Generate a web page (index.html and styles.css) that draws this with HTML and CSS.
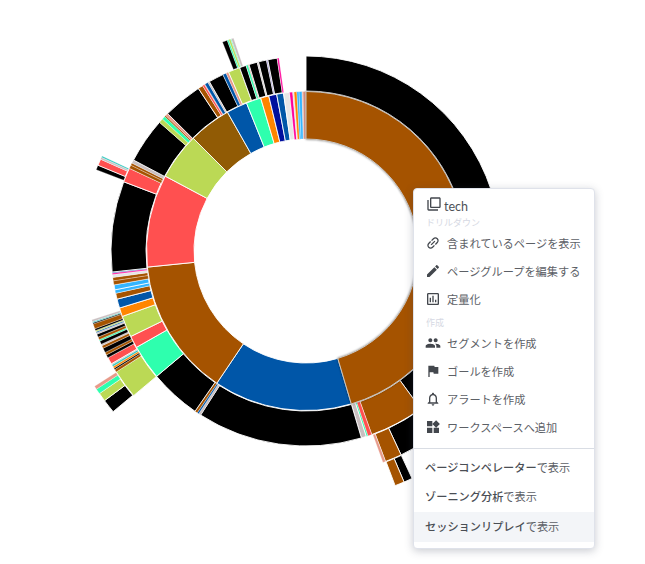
FILE: index.html
```html
<!DOCTYPE html>
<html lang="ja">
<head>
<meta charset="utf-8">
<title>Sunburst</title>
<link rel="stylesheet" href="styles.css">
</head>
<body>
<main class="stage">
  <svg id="sunburst" class="chart" width="645" height="564" viewBox="0 0 645 564" aria-label="sunburst"></svg>
  <nav class="menu">
    <div class="menu-title">
      <svg class="icon title-icon" viewBox="0 0 24 24"><path d="M4 6H2v14c0 1.1.9 2 2 2h14v-2H4V6zm16-4H8c-1.1 0-2 .9-2 2v12c0 1.1.9 2 2 2h12c1.1 0 2-.9 2-2V4c0-1.1-.9-2-2-2zm0 14H8V4h12v12z"/></svg>
      <span>tech</span>
    </div>
    <div class="menu-label">ドリルダウン</div>
    <a class="menu-item"><svg class="icon" viewBox="0 0 24 24"><path transform="rotate(-45 12 12)" d="M3.9 12c0-1.71 1.39-3.1 3.1-3.1h4V7H7c-2.76 0-5 2.24-5 5s2.24 5 5 5h4v-1.9H7c-1.71 0-3.1-1.39-3.1-3.1zM8 13h8v-2H8v2zm9-6h-4v1.9h4c1.71 0 3.1 1.39 3.1 3.1s-1.39 3.1-3.1 3.1h-4V17h4c2.76 0 5-2.24 5-5s-2.24-5-5-5z"/></svg>含まれているページを表示</a>
    <a class="menu-item"><svg class="icon" viewBox="0 0 24 24"><path d="M3 17.25V21h3.75L17.81 9.94l-3.75-3.75L3 17.25zM20.71 7.04c.39-.39.39-1.02 0-1.41l-2.34-2.34c-.39-.39-1.02-.39-1.41 0l-1.83 1.83 3.75 3.75 1.83-1.83z"/></svg>ページグループを編集する</a>
    <a class="menu-item"><svg class="icon" viewBox="0 0 24 24"><path d="M19 3H5c-1.1 0-2 .9-2 2v14c0 1.1.9 2 2 2h14c1.1 0 2-.9 2-2V5c0-1.1-.9-2-2-2zm0 16H5V5h14v14zM7 10h2v7H7zm4-3h2v10h-2zm4 6h2v4h-2z"/></svg>定量化</a>
    <div class="menu-label menu-label-gap">作成</div>
    <a class="menu-item"><svg class="icon" viewBox="0 0 24 24"><path d="M16 11c1.66 0 2.99-1.34 2.99-3S17.66 5 16 5c-1.66 0-3 1.34-3 3s1.34 3 3 3zm-8 0c1.66 0 2.99-1.34 2.99-3S9.66 5 8 5C6.34 5 5 6.34 5 8s1.34 3 3 3zm0 2c-2.33 0-7 1.17-7 3.5V19h14v-2.5c0-2.33-4.67-3.5-7-3.5zm8 0c-.29 0-.62.02-.97.05 1.16.84 1.97 1.97 1.97 3.45V19h6v-2.5c0-2.33-4.67-3.5-7-3.5z"/></svg>セグメントを作成</a>
    <a class="menu-item"><svg class="icon" viewBox="0 0 24 24"><path d="M14.4 6L14 4H5v17h2v-7h5.6l.4 2h7V6z"/></svg>ゴールを作成</a>
    <a class="menu-item"><svg class="icon" viewBox="0 0 24 24"><path d="M12 22c1.1 0 2-.9 2-2h-4c0 1.1.9 2 2 2zm6-6v-5c0-3.07-1.63-5.64-4.5-6.32V4c0-.83-.67-1.5-1.5-1.5s-1.5.67-1.5 1.5v.68C7.64 5.36 6 7.92 6 11v5l-2 2v1h16v-1l-2-2zm-2 1H8v-6c0-2.48 1.51-4.5 4-4.5s4 2.02 4 4.5v6z"/></svg>アラートを作成</a>
    <a class="menu-item"><svg class="icon" viewBox="0 0 24 24"><path d="M13 13v8h8v-8h-8zM3 21h8v-8H3v8zM3 3v8h8V3H3zm13.66-1.31L11 7.34 16.66 13l5.66-5.66-5.66-5.65z"/></svg>ワークスペースへ追加</a>
    <hr class="menu-divider">
    <a class="menu-link"><span class="strong">ページコンペレーター</span>で表示</a>
    <a class="menu-link"><span class="strong">ゾーニング分析</span>で表示</a>
    <a class="menu-link is-hover"><span class="strong">セッションリプレイ</span>で表示</a>
  </nav>
</main>
<script src="chart.js"></script>
</body>
</html>
```
FILE: styles.css
```css
* { box-sizing: border-box; }
html, body { margin: 0; padding: 0; background: #fff; }
body {
  width: 645px;
  height: 564px;
  overflow: hidden;
  font-family: "Noto Sans CJK JP", "Noto Sans", sans-serif;
}
.stage { position: relative; width: 645px; height: 564px; }
.chart { display: block; }
.seg { stroke: #fff; stroke-width: 0.9; }
.seg-thin { stroke: #fff; stroke-width: 0.3; }
.seg-active { stroke: #c9c5c0; stroke-width: 1; filter: drop-shadow(0 0 1px rgba(0,0,0,.45)); }

.menu {
  position: absolute;
  left: 413px;
  top: 188px;
  width: 182px;
  height: 361px;
  padding-top: 7px;
  background: #fff;
  border: 1px solid #dfe2ea;
  border-radius: 4px;
  box-shadow: 0 2px 8px rgba(60, 70, 90, .28);
  color: #5c6066;
}
.menu-title {
  display: flex;
  align-items: center;
  height: 21px;
  padding-left: 12px;
  font-family: "Lato", "Noto Sans", sans-serif;
  font-size: 12.5px;
  color: #4d5157;
}
.menu-label {
  height: 12px;
  padding-left: 12px;
  font-size: 9px;
  line-height: 12px;
  color: #d6d9e3;
}
.menu-label-gap { margin-top: 4px; }
.menu-item {
  display: flex;
  align-items: center;
  height: 28px;
  padding-left: 11px;
  font-size: 11.2px;
  white-space: nowrap;
}
.icon { flex: none; width: 16px; height: 16px; margin-right: 6px; fill: #43474d; }
.menu-title .title-icon { margin-right: 2px; margin-top: -6px; }
.menu-divider {
  margin: 7px 0 4px;
  border: 0;
  border-top: 1px solid #d9dde4;
}
.menu-link {
  display: flex;
  align-items: center;
  height: 29.5px;
  padding: 0 0 2px 11px;
  font-size: 11.2px;
  white-space: nowrap;
}
.strong { color: #4a4e54; font-weight: 500; }
.is-hover { background: #f3f5f8; }
```
FILE: chart.js
```js
(function () {
  var C = {
    br: '#a55300', dk: '#915b05', bl: '#0056a8', rd: '#ff5050', lm: '#bbd955',
    mt: '#2effae', or: '#ff8500', nv: '#00109e', sk: '#33b5ff', mg: '#ff0099',
    gy: '#c9bfc0', lg: '#e6e6e6', sa: '#e79a8a', te: '#35c9c0', k: '#000000', pu: '#9b8fd0'
  };
  // Each ring: inner radius, outer radius, runs of [start angle, [width, colour]...]
  var rings = [
    { r0: 112, r1: 159.5, runs: [[163.5, [50.5, 'bl'], [50.2, 'br'], [33.8, 'rd'], [17, 'lm'], [15.5, 'dk'], [7.6, 'bl'], [5.4, 'mt'], [3, 'or'], [2.9, 'nv'], [2.5, 'bl'], [2.2, 'lg'], [1.1, 'mg'], [.5, 'lg'], [1, 'or'], [.8, 'sk'], [1.1, 'sk'], [.3, 'sa'], [1, 'sa']]] },
    { r0: 160, r1: 195, runs: [
      [0, [144, 'k'], [16.3, 'br'], [1.2, 'rd'], [.5, 'mt'], [1.5, 'gy'], [49.2, 'k']],
      [212.7, [.7, 'gy'], [.5, 'bl'], [.8, 'br'], [15.3, 'k'], [10.4, 'mt'], [3.6, 'rd'], [6.4, 'lm'], [2.6, 'or'], [2.7, 'bl'], [1.8, 'br'], [1, 'sk'], [1.5, 'sk'], [1.2, 'br'], [1, 'br'], [.9, 'lg'], [.4, 'mg'], [.3, 'bl'], [27, 'k'], [4.3, 'rd'], [1, 'br'], [.7, 'br'], [1, 'gy'], [13.5, 'k'], [1.3, 'lm'], [1, 'mt'], [.4, 'br'], [.8, 'sa'], [11.7, 'k'], [1.5, 'br'], [.6, 'rd'], [.2, 'sa'], [1, 'bl'], [.5, 'gy'], [4.5, 'k'], [1, 'bl'], [.8, 'sa'], [3.5, 'lm'], [2, 'k'], [.6, 'mt'], [.3, 'sa'], [2.5, 'k'], [.4, 'gy'], [2.4, 'k'], [.4, 'pu'], [2.8, 'k'], [.5, 'mg']]
    ] },
    { r0: 195.5, r1: 225, runs: [
      [144, [11, 'k'], [4.3, 'br'], [.7, 'sa']],
      [230, [7.5, 'lm'], [.7, 'br'], [.4, 'k'], [.5, 'or'], [.5, 'te'], [.3, 'gy'], [1.8, 'rd'], [.8, 'k'], [.7, 'br'], [1.2, 'k'], [.7, 'br'], [.4, 'gy'], [.9, 'k'], [.4, 'mt'], [.7, 'br'], [.8, 'k'], [.4, 'gy'], [.3, 'bl'], [.3, 'lm'], [.5, 'k'], [1.3, 'br'], [.3, 'k'], [.3, 'te'], [.5, 'gy']],
      [291.2, [1.2, 'k'], [1.7, 'rd'], [.5, 'gy'], [.4, 'te']],
      [338.2, [1.3, 'k'], [.4, 'mt'], [.5, 'lm'], [.2, 'mt'], [.6, 'gy']]
    ] },
    { r0: 225.5, r1: 251, runs: [
      [155, [2, 'k'], [2.2, 'br']],
      [230.2, [3.2, 'k'], [2, 'lm'], [1.2, 'mt'], [.8, 'sa']]
    ] }
  ];
  var cx = 306, cy = 251, NS = 'http://www.w3.org/2000/svg';
  var svg = document.getElementById('sunburst');

  function pt(r, a) {
    var t = a * Math.PI / 180;
    return (cx + r * Math.sin(t)).toFixed(2) + ' ' + (cy - r * Math.cos(t)).toFixed(2);
  }
  function arc(r0, r1, a0, a1) {
    var large = a1 - a0 > 180 ? 1 : 0;
    return 'M' + pt(r0, a0) + 'A' + r0 + ' ' + r0 + ' 0 ' + large + ' 1 ' + pt(r0, a1) +
      'L' + pt(r1, a1) + 'A' + r1 + ' ' + r1 + ' 0 ' + large + ' 0 ' + pt(r1, a0) + 'Z';
  }
  function add(d, fill, cls) {
    var p = document.createElementNS(NS, 'path');
    p.setAttribute('d', d);
    p.setAttribute('fill', fill);
    p.setAttribute('class', cls);
    svg.appendChild(p);
  }
  rings.forEach(function (ring) {
    ring.runs.forEach(function (run) {
      var a = run[0];
      run.slice(1).forEach(function (s) {
        add(arc(ring.r0, ring.r1, a, a + s[0]), C[s[1]], s[0] < 1.5 ? 'seg-thin' : 'seg');
        a += s[0];
      });
    });
  });
  // The hovered segment sits on top with its halo.
  add(arc(112, 159.5, 0, 163.5), C.br, 'seg-active');
})();
```
